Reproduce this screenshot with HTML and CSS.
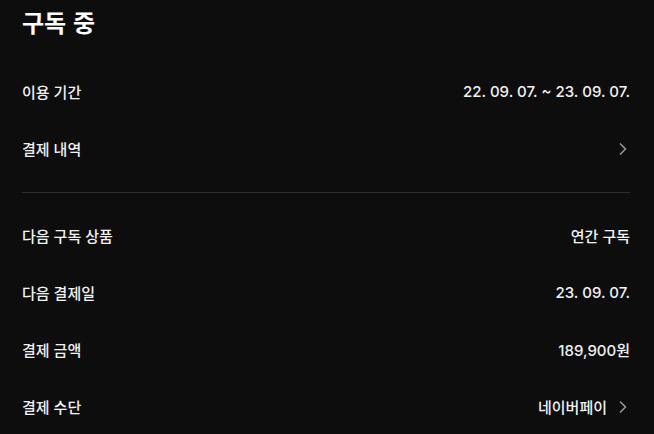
FILE: index.html
```html
<!DOCTYPE html>
<html lang="ko">
<head>
<meta charset="utf-8">
<link rel="stylesheet" href="styles.css">
</head>
<body>
<div class="page">
  <h1 class="title">구독 중</h1>
  <div class="row"><span class="label">이용 기간</span><span class="value">22. 09. 07. ~ 23. 09. 07.</span></div>
  <div class="row"><span class="label">결제 내역</span><span class="value"><svg class="chev" width="8" height="14" viewBox="0 0 8 14"><path d="M1 1.5 L6.5 7 L1 12.5" fill="none" stroke="#9a9a9a" stroke-width="1.5"/></svg></span></div>
  <hr class="divider">
  <div class="row"><span class="label">다음 구독 상품</span><span class="value">연간 구독</span></div>
  <div class="row"><span class="label">다음 결제일</span><span class="value">23. 09. 07.</span></div>
  <div class="row"><span class="label">결제 금액</span><span class="value">189,900원</span></div>
  <div class="row"><span class="label">결제 수단</span><span class="value">네이버페이<svg class="chev" width="8" height="14" viewBox="0 0 8 14"><path d="M1 1.5 L6.5 7 L1 12.5" fill="none" stroke="#9a9a9a" stroke-width="1.5"/></svg></span></div>
</div>
</body>
</html>
```
FILE: styles.css
```css
html, body {
  margin: 0;
  padding: 0;
  background: #0d0d0d;
}
body {
  font-family: "Inter", "Noto Sans CJK KR", "Noto Sans", sans-serif;
  color: #f2f2f2;
}
.page {
  padding: 0 24px 0 22px;
}
.title {
  margin: 0;
  font-family: "Noto Sans CJK KR", sans-serif;
  font-size: 24px;
  font-weight: 700;
  line-height: 44px;
  color: #ffffff;
  height: 63px;
}
.row {
  display: flex;
  justify-content: space-between;
  align-items: center;
  height: 57px;
  font-size: 15px;
  font-weight: 500;
}
.value {
  display: flex;
  align-items: center;
  gap: 12px;
}
.chev {
  display: block;
  margin-right: 3px;
}
.divider {
  border: 0;
  height: 1px;
  background: #2e2e2e;
  margin: 15px 0 14px;
}
```
